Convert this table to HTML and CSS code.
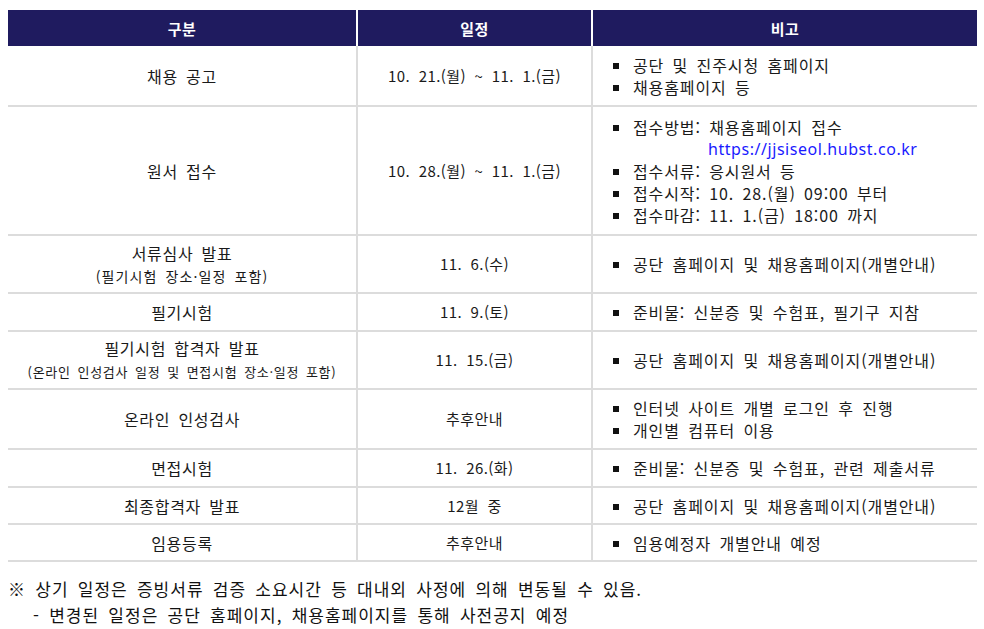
FILE: index.html
```html
<!DOCTYPE html>
<html lang="ko">
<head>
<meta charset="utf-8">
<link rel="stylesheet" href="styles.css">
</head>
<body>
<table class="sched">
  <colgroup>
    <col class="c1"><col class="c2"><col class="c3">
  </colgroup>
  <thead>
    <tr class="hd"><th>구분</th><th>일정</th><th>비고</th></tr>
  </thead>
  <tbody>
    <tr class="r60">
      <td class="name">채용 공고</td>
      <td class="date">10. 21.(월) ~ 11. 1.(금)</td>
      <td class="note"><ul><li>공단 및 진주시청 홈페이지</li><li>채용홈페이지 등</li></ul></td>
    </tr>
    <tr class="r129">
      <td class="name">원서 접수</td>
      <td class="date">10. 28.(월) ~ 11. 1.(금)</td>
      <td class="note"><ul>
        <li>접수방법: 채용홈페이지 접수<span class="url">https://jjsiseol.hubst.co.kr</span></li>
        <li>접수서류: 응시원서 등</li>
        <li>접수시작: 10. 28.(월) 09:00 부터</li>
        <li>접수마감: 11. 1.(금) 18:00 까지</li>
      </ul></td>
    </tr>
    <tr class="r58">
      <td class="name">서류심사 발표<br><span class="sub">(필기시험 장소·일정 포함)</span></td>
      <td class="date">11. 6.(수)</td>
      <td class="note"><ul><li>공단 홈페이지 및 채용홈페이지(개별안내)</li></ul></td>
    </tr>
    <tr class="r38">
      <td class="name">필기시험</td>
      <td class="date">11. 9.(토)</td>
      <td class="note"><ul><li>준비물: 신분증 및 수험표, 필기구 지참</li></ul></td>
    </tr>
    <tr class="r58">
      <td class="name">필기시험 합격자 발표<br><span class="sub2">(온라인 인성검사 일정 및 면접시험 장소·일정 포함)</span></td>
      <td class="date">11. 15.(금)</td>
      <td class="note"><ul><li>공단 홈페이지 및 채용홈페이지(개별안내)</li></ul></td>
    </tr>
    <tr class="r60">
      <td class="name">온라인 인성검사</td>
      <td class="date">추후안내</td>
      <td class="note"><ul><li>인터넷 사이트 개별 로그인 후 진행</li><li>개인별 컴퓨터 이용</li></ul></td>
    </tr>
    <tr class="r38">
      <td class="name">면접시험</td>
      <td class="date">11. 26.(화)</td>
      <td class="note"><ul><li>준비물: 신분증 및 수험표, 관련 제출서류</li></ul></td>
    </tr>
    <tr class="r37">
      <td class="name">최종합격자 발표</td>
      <td class="date">12월 중</td>
      <td class="note"><ul><li>공단 홈페이지 및 채용홈페이지(개별안내)</li></ul></td>
    </tr>
    <tr class="r37">
      <td class="name">임용등록</td>
      <td class="date">추후안내</td>
      <td class="note"><ul><li>임용예정자 개별안내 예정</li></ul></td>
    </tr>
  </tbody>
</table>
<div class="foot">
  <p class="fl1">※ 상기 일정은 증빙서류 검증 소요시간 등 대내외 사정에 의해 변동될 수 있음.</p>
  <p class="fl2">- 변경된 일정은 공단 홈페이지, 채용홈페이지를 통해 사전공지 예정</p>
</div>
</body>
</html>
```

FILE: styles.css
```css
html, body {
  margin: 0;
  padding: 0;
  background: #ffffff;
}
body {
  padding: 10px 7px 0 8px;
  font-family: "Noto Sans CJK KR", "Noto Sans", sans-serif;
  color: #1a1a1a;
  font-size: 16px;
  font-weight: 400;
}
.sched {
  width: 969px;
  border-collapse: collapse;
  table-layout: fixed;
}
.c1 { width: 349px; }
.c2 { width: 235px; }
.c3 { width: 385px; }
.hd {
  height: 36px;
  background: #1f1b5f;
}
.hd th {
  color: #ffffff;
  font-weight: 700;
  font-size: 15px;
  letter-spacing: 0.5px;
  padding: 0;
  border-left: 2px solid #ffffff;
  vertical-align: middle;
}
.hd th:first-child { border-left: none; }
.sched td {
  border-bottom: 2px solid #dcdcdc;
  border-left: 2px solid #dcdcdc;
  text-align: center;
  vertical-align: middle;
  padding: 0;
  line-height: 22px;
}
.sched td:first-child { border-left: none; }
.name {
  letter-spacing: 0.7px;
  word-spacing: 3px;
}
.date {
  font-size: 15px;
  letter-spacing: 0.4px;
  word-spacing: 4px;
}
.sched td.note {
  text-align: left;
  padding-left: 20px;
  letter-spacing: 0.9px;
  word-spacing: 3px;
}
.r60 { height: 60px; }
.r129 { height: 129px; }
.r58 { height: 58px; }
.r38 { height: 38px; }
.r37 { height: 37px; }
.sub {
  font-size: 14px;
  letter-spacing: 1.1px;
  word-spacing: 3px;
}
.sub2 {
  font-size: 13px;
  letter-spacing: 0.7px;
  word-spacing: 2.5px;
}
.note ul {
  list-style: none;
  margin: 0;
  padding: 0;
}
.note li {
  position: relative;
  padding-left: 20px;
}
.note li::before {
  content: "";
  position: absolute;
  left: 0;
  top: 9px;
  width: 6px;
  height: 6px;
  background: #111111;
}
.url {
  display: block;
  padding-left: 75px;
  font-family: "Noto Sans", sans-serif;
  font-weight: 400;
  font-size: 16px;
  color: #1a1aff;
  letter-spacing: 0.55px;
  word-spacing: 0;
}
.foot { padding-top: 14px; }
.foot p {
  margin: 0;
  line-height: 26px;
  font-size: 17px;
  font-weight: 400;
  letter-spacing: 1px;
  word-spacing: 3.5px;
  color: #111111;
}
.fl2 { padding-left: 25px; }
```
